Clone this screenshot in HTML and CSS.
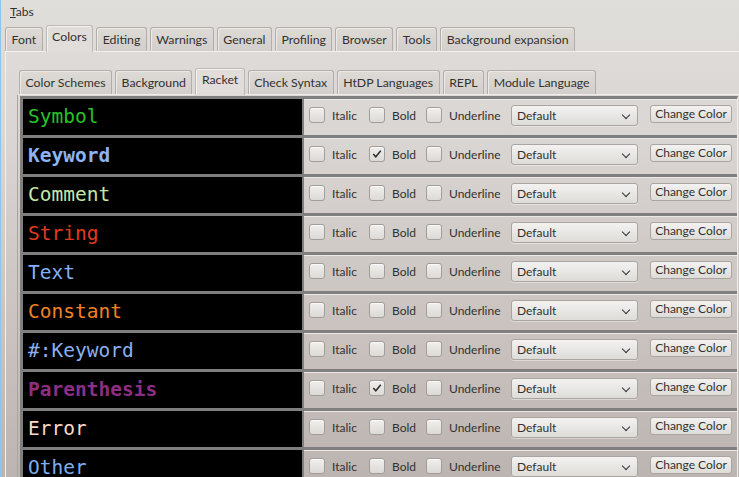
FILE: index.html
```html
<!DOCTYPE html>
<html>
<head>
<meta charset="utf-8">
<link rel="stylesheet" href="styles.css">
</head>
<body>
<div class="window">
  <div class="title"><span class="mn">T</span>abs</div>
  <div class="tabbar outer-tabs">
    <div class="tab">Font</div>
    <div class="tab selected">Colors</div>
    <div class="tab">Editing</div>
    <div class="tab">Warnings</div>
    <div class="tab">General</div>
    <div class="tab">Profiling</div>
    <div class="tab">Browser</div>
    <div class="tab">Tools</div>
    <div class="tab">Background expansion</div>
  </div>
  <div class="panel outer-panel">
    <div class="tabbar inner-tabs">
      <div class="tab">Color Schemes</div>
      <div class="tab">Background</div>
      <div class="tab selected">Racket</div>
      <div class="tab">Check Syntax</div>
      <div class="tab">HtDP Languages</div>
      <div class="tab">REPL</div>
      <div class="tab">Module Language</div>
    </div>
    <div class="panel inner-panel">
      <div class="table">
        <div class="row">
          <div class="sample c-symbol">Symbol</div>
          <div class="controls">
            <label class="opt"><span class="cb"></span>Italic</label>
            <label class="opt"><span class="cb"></span>Bold</label>
            <label class="opt"><span class="cb"></span>Underline</label>
            <div class="select-wrap"><div class="select">Default<span class="chev"></span></div></div>
            <div class="button">Change Color</div>
          </div>
        </div>
        <div class="row">
          <div class="sample c-keyword bold">Keyword</div>
          <div class="controls">
            <label class="opt"><span class="cb"></span>Italic</label>
            <label class="opt"><span class="cb checked"><svg viewBox="0 0 15 15"><path d="M3.5 7.5 L6.2 10.5 L11.5 4" /></svg></span>Bold</label>
            <label class="opt"><span class="cb"></span>Underline</label>
            <div class="select-wrap"><div class="select">Default<span class="chev"></span></div></div>
            <div class="button">Change Color</div>
          </div>
        </div>
        <div class="row">
          <div class="sample c-comment">Comment</div>
          <div class="controls">
            <label class="opt"><span class="cb"></span>Italic</label>
            <label class="opt"><span class="cb"></span>Bold</label>
            <label class="opt"><span class="cb"></span>Underline</label>
            <div class="select-wrap"><div class="select">Default<span class="chev"></span></div></div>
            <div class="button">Change Color</div>
          </div>
        </div>
        <div class="row">
          <div class="sample c-string">String</div>
          <div class="controls">
            <label class="opt"><span class="cb"></span>Italic</label>
            <label class="opt"><span class="cb"></span>Bold</label>
            <label class="opt"><span class="cb"></span>Underline</label>
            <div class="select-wrap"><div class="select">Default<span class="chev"></span></div></div>
            <div class="button">Change Color</div>
          </div>
        </div>
        <div class="row">
          <div class="sample c-text">Text</div>
          <div class="controls">
            <label class="opt"><span class="cb"></span>Italic</label>
            <label class="opt"><span class="cb"></span>Bold</label>
            <label class="opt"><span class="cb"></span>Underline</label>
            <div class="select-wrap"><div class="select">Default<span class="chev"></span></div></div>
            <div class="button">Change Color</div>
          </div>
        </div>
        <div class="row">
          <div class="sample c-constant">Constant</div>
          <div class="controls">
            <label class="opt"><span class="cb"></span>Italic</label>
            <label class="opt"><span class="cb"></span>Bold</label>
            <label class="opt"><span class="cb"></span>Underline</label>
            <div class="select-wrap"><div class="select">Default<span class="chev"></span></div></div>
            <div class="button">Change Color</div>
          </div>
        </div>
        <div class="row">
          <div class="sample c-hkeyword">#:Keyword</div>
          <div class="controls">
            <label class="opt"><span class="cb"></span>Italic</label>
            <label class="opt"><span class="cb"></span>Bold</label>
            <label class="opt"><span class="cb"></span>Underline</label>
            <div class="select-wrap"><div class="select">Default<span class="chev"></span></div></div>
            <div class="button">Change Color</div>
          </div>
        </div>
        <div class="row">
          <div class="sample c-paren bold">Parenthesis</div>
          <div class="controls">
            <label class="opt"><span class="cb"></span>Italic</label>
            <label class="opt"><span class="cb checked"><svg viewBox="0 0 15 15"><path d="M3.5 7.5 L6.2 10.5 L11.5 4" /></svg></span>Bold</label>
            <label class="opt"><span class="cb"></span>Underline</label>
            <div class="select-wrap"><div class="select">Default<span class="chev"></span></div></div>
            <div class="button">Change Color</div>
          </div>
        </div>
        <div class="row">
          <div class="sample c-error">Error</div>
          <div class="controls">
            <label class="opt"><span class="cb"></span>Italic</label>
            <label class="opt"><span class="cb"></span>Bold</label>
            <label class="opt"><span class="cb"></span>Underline</label>
            <div class="select-wrap"><div class="select">Default<span class="chev"></span></div></div>
            <div class="button">Change Color</div>
          </div>
        </div>
        <div class="row">
          <div class="sample c-other">Other</div>
          <div class="controls">
            <label class="opt"><span class="cb"></span>Italic</label>
            <label class="opt"><span class="cb"></span>Bold</label>
            <label class="opt"><span class="cb"></span>Underline</label>
            <div class="select-wrap"><div class="select">Default<span class="chev"></span></div></div>
            <div class="button">Change Color</div>
          </div>
        </div>
      </div>
    </div>
  </div>
</div>
</body>
</html>
```
FILE: styles.css
```css
html, body {
  margin: 0;
  padding: 0;
}
body {
  width: 739px;
  height: 477px;
  overflow: hidden;
  font-family: "Lato", "DejaVu Sans", sans-serif;
  font-size: 12px;
  color: #333130;
  background: linear-gradient(#e0dedb 0%, #d9d5d2 30%, #c9c2be 70%, #bcb4b0 100%);
}
.window {
  height: 477px;
  border-left: 1px solid #8cc4ea;
  box-sizing: border-box;
}
.title {
  height: 25px;
  padding: 5px 0 0 9px;
  box-sizing: border-box;
  line-height: 14px;
}
.mn {
  text-decoration: underline;
}
.tabbar {
  display: flex;
  align-items: flex-end;
  gap: 3px;
  position: relative;
  z-index: 1;
}
.outer-tabs {
  height: 26px;
  padding-left: 4px;
}
.tab {
  height: 23px;
  line-height: 23px;
  padding: 0 5.5px;
  font-size: 12.3px;
  border: 1px solid #b3aeaa;
  border-bottom: none;
  border-radius: 3px 3px 0 0;
  background: linear-gradient(#dedbd7, #d2cecb);
  box-shadow: inset 1px 1px 0 #ece9e6;
  white-space: nowrap;
}
.tab.selected {
  height: 26px;
  line-height: 22px;
  background: #e0dddb;
  border-color: #bdb8b4;
  margin-bottom: -1px;
  box-shadow: inset 1px 1px 0 #f4f2f0;
}
.panel {
  border-top: 1px solid #f3f1ef;
  border-left: 1px solid #f3f1ef;
}
.outer-panel {
  margin-left: 4px;
  padding: 16px 0 0 11px;
}
.inner-tabs {
  height: 26px;
  padding-left: 2px;
}
.inner-panel {
  border-top-color: #f0eeec;
  border-left: 1px solid #aaa49f;
  padding: 1px 0 0 2px;
}
.table {
  border-top: 3px solid #7f7f7f;
  border-left: 3px solid #7f7f7f;
  border-right: 1px solid #f0eeec;
  width: 714px;
}
.row {
  display: flex;
  height: 36px;
  border-bottom: 3px solid #7f7f7f;
}
.sample {
  flex: none;
  background: #000;
  border-right: 2px solid #7f7f7f;
  padding-left: 5px;
  box-sizing: border-box;
  width: 281px;
  font-family: "DejaVu Sans Mono", monospace;
  font-size: 19.5px;
  line-height: 36px;
}
.bold { font-weight: bold; }
.c-symbol { color: #26c426; }
.c-keyword { color: #8db3f5; }
.c-comment { color: #c6e6a6; }
.c-string { color: #e03a1e; }
.c-text { color: #82b0f4; }
.c-constant { color: #f08224; }
.c-hkeyword { color: #8cb0ee; }
.c-paren { color: #8c2e82; }
.c-error { color: #fdd8c8; }
.c-other { color: #7eaef0; }

.controls {
  flex: 1;
  display: grid;
  grid-template-columns: 60px 57px 85px 139px 82px;
  align-items: center;
  padding: 0 0 4px 5px;
  box-shadow: inset 0 1px 0 #ebe8e5;
}
.opt {
  display: flex;
  align-items: center;
  gap: 7px;
  white-space: nowrap;
  color: #333130;
}
.cb {
  width: 14px;
  height: 14px;
  border: 1px solid #a39d98;
  border-radius: 3px;
  background: linear-gradient(#f0efed, #dcdad7);
  box-shadow: inset 0 1px 0 #fbfafa;
  flex: none;
  display: flex;
  align-items: center;
  justify-content: center;
}
.cb svg {
  width: 14px;
  height: 14px;
}
.cb svg path {
  fill: none;
  stroke: #2e2c2a;
  stroke-width: 1.6;
}
.select {
  width: 127px;
  height: 21px;
  box-sizing: border-box;
  border: 1px solid #aaa5a0;
  border-radius: 3px;
  background: linear-gradient(#f3f2f0, #dedcd9);
  box-shadow: 0 1px 0 rgba(255,255,255,0.4);
  line-height: 20px;
  padding-left: 5px;
  position: relative;
  color: #333130;
}
.chev {
  position: absolute;
  right: 8px;
  top: 6px;
  width: 5px;
  height: 5px;
  border-right: 1.6px solid #333;
  border-bottom: 1.6px solid #333;
  transform: rotate(45deg);
}
.button {
  width: 82px;
  height: 18px;
  box-sizing: border-box;
  border: 1px solid #aaa5a0;
  border-radius: 3px;
  background: linear-gradient(#f3f2f0, #dedcd9);
  line-height: 16px;
  text-align: center;
  margin-top: -3px;
  color: #333130;
  white-space: nowrap;
}
```
